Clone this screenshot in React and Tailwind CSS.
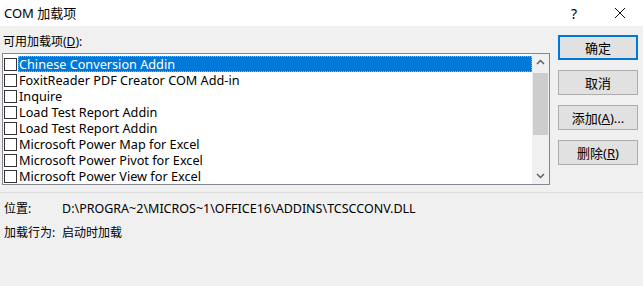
import React from 'react'

const items = [
  'Chinese Conversion Addin',
  'FoxitReader PDF Creator COM Add-in',
  'Inquire',
  'Load Test Report Addin',
  'Load Test Report Addin',
  'Microsoft Power Map for Excel',
  'Microsoft Power Pivot for Excel',
  'Microsoft Power View for Excel',
]

const font = { fontFamily: '"Noto Sans", "Noto Sans CJK SC", sans-serif' }

function Btn({ children, primary }) {
  return (
    <button className={`w-[80px] h-[25px] flex items-center justify-center text-[13px] leading-[16px] text-black bg-[#e1e1e1] ${primary ? 'border-2 border-[#0078d7]' : 'border border-[#adadad]'}`}>
      {children}
    </button>
  )
}

export default function App(){
  return (
    <div className="w-[643px] h-[286px] bg-[#f0f0f0] overflow-hidden text-black" style={font}>
      <div className="h-[26px] bg-white flex items-center pl-[4px]">
        <span className="flex-1 text-[13px] leading-none">COM 加载项</span>
        <span className="w-[46px] shrink-0 text-[14px] text-center">?</span>
        <svg className="shrink-0" width="46" height="26" viewBox="0 0 46 26"><path d="M18 8 L28 18 M28 8 L18 18" stroke="#111" strokeWidth="1" fill="none" /></svg>
      </div>
      <div className="flex">
        <div className="w-[550px]">
          <div className="h-[27px] pl-[3px] pt-[8px] text-[12px] leading-[16px]">可用加载项(<span className="underline">D</span>):</div>
          <div className="ml-[2px] w-[548px] h-[132px] border border-[#828790] bg-white flex">
            <div className="flex-1 pt-[2px]">
              {items.map((t, i) => (
                <div key={i} className="h-[16px] flex items-center">
                  <div className="w-[13px] h-[13px] shrink-0 border border-[#333] bg-white ml-[1px] mr-[1px]" />
                  <div className={`h-[16px] flex-1 pl-[1px] text-[12.7px] leading-[16px] whitespace-nowrap ${i === 0 ? 'bg-[#0078d7] text-white outline outline-1 outline-dotted outline-[#7fb4e6] -outline-offset-1' : ''}`}>{t}</div>
                </div>
              ))}
            </div>
            <div className="w-[17px] bg-[#f0f0f0] flex flex-col items-center">
              <svg width="17" height="17" viewBox="0 0 17 17"><path d="M5 10 L8.5 6.5 L12 10" stroke="#606060" strokeWidth="1.5" fill="none" /></svg>
              <div className="w-[15px] h-[62px] bg-[#cdcdcd] mt-[2px]" />
              <div className="flex-1" />
              <svg width="17" height="17" viewBox="0 0 17 17"><path d="M5 7 L8.5 10.5 L12 7" stroke="#606060" strokeWidth="1.5" fill="none" /></svg>
            </div>
          </div>
        </div>
        <div className="ml-[8px] pt-[9px] flex flex-col gap-[10px]">
          <Btn primary>确定</Btn>
          <Btn>取消</Btn>
          <Btn>添加(<span className="underline">A</span>)...</Btn>
          <Btn>删除(<span className="underline">R</span>)</Btn>
        </div>
      </div>
      <div className="mt-[7px] h-px bg-[#dcdcdc]" />
      <div className="pl-[4px] pt-[8px] text-[12px] leading-[16px] flex flex-col gap-[8px]">
        <div className="flex"><span className="w-[58px]">位置:</span><span className="text-[12.5px]">D:\PROGRA~2\MICROS~1\OFFICE16\ADDINS\TCSCCONV.DLL</span></div>
        <div className="flex"><span className="w-[58px]">加载行为:</span><span>启动时加载</span></div>
      </div>
    </div>
  )
}
